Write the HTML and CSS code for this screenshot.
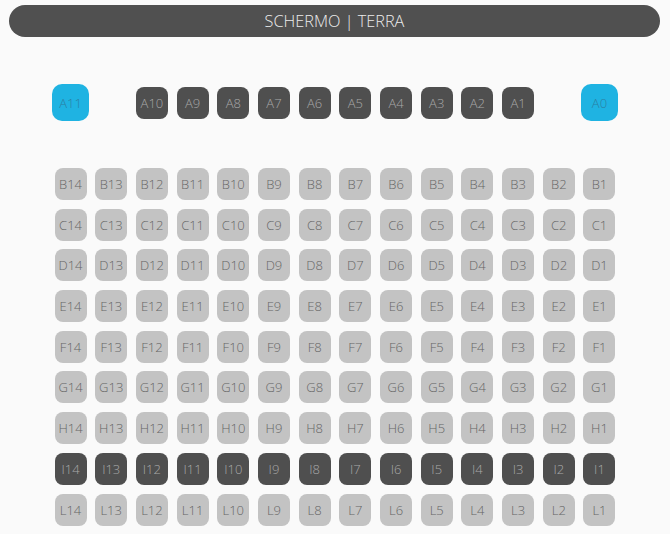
FILE: index.html
```html
<!DOCTYPE html>
<html>
<head>
<meta charset="utf-8">
<link rel="stylesheet" href="styles.css">
</head>
<body>
<div class="screen">SCHERMO | TERRA</div>
<div class="row-a">
  <div class="seat vip c1">A11</div>
  <div class="seat taken c3">A10</div>
  <div class="seat taken">A9</div>
  <div class="seat taken">A8</div>
  <div class="seat taken">A7</div>
  <div class="seat taken">A6</div>
  <div class="seat taken">A5</div>
  <div class="seat taken">A4</div>
  <div class="seat taken">A3</div>
  <div class="seat taken">A2</div>
  <div class="seat taken">A1</div>
  <div class="seat vip c14">A0</div>
</div>
<div class="hall">
  <div class="seat">B14</div><div class="seat">B13</div><div class="seat">B12</div><div class="seat">B11</div><div class="seat">B10</div><div class="seat">B9</div><div class="seat">B8</div><div class="seat">B7</div><div class="seat">B6</div><div class="seat">B5</div><div class="seat">B4</div><div class="seat">B3</div><div class="seat">B2</div><div class="seat">B1</div>
  <div class="seat">C14</div><div class="seat">C13</div><div class="seat">C12</div><div class="seat">C11</div><div class="seat">C10</div><div class="seat">C9</div><div class="seat">C8</div><div class="seat">C7</div><div class="seat">C6</div><div class="seat">C5</div><div class="seat">C4</div><div class="seat">C3</div><div class="seat">C2</div><div class="seat">C1</div>
  <div class="seat">D14</div><div class="seat">D13</div><div class="seat">D12</div><div class="seat">D11</div><div class="seat">D10</div><div class="seat">D9</div><div class="seat">D8</div><div class="seat">D7</div><div class="seat">D6</div><div class="seat">D5</div><div class="seat">D4</div><div class="seat">D3</div><div class="seat">D2</div><div class="seat">D1</div>
  <div class="seat">E14</div><div class="seat">E13</div><div class="seat">E12</div><div class="seat">E11</div><div class="seat">E10</div><div class="seat">E9</div><div class="seat">E8</div><div class="seat">E7</div><div class="seat">E6</div><div class="seat">E5</div><div class="seat">E4</div><div class="seat">E3</div><div class="seat">E2</div><div class="seat">E1</div>
  <div class="seat">F14</div><div class="seat">F13</div><div class="seat">F12</div><div class="seat">F11</div><div class="seat">F10</div><div class="seat">F9</div><div class="seat">F8</div><div class="seat">F7</div><div class="seat">F6</div><div class="seat">F5</div><div class="seat">F4</div><div class="seat">F3</div><div class="seat">F2</div><div class="seat">F1</div>
  <div class="seat">G14</div><div class="seat">G13</div><div class="seat">G12</div><div class="seat">G11</div><div class="seat">G10</div><div class="seat">G9</div><div class="seat">G8</div><div class="seat">G7</div><div class="seat">G6</div><div class="seat">G5</div><div class="seat">G4</div><div class="seat">G3</div><div class="seat">G2</div><div class="seat">G1</div>
  <div class="seat">H14</div><div class="seat">H13</div><div class="seat">H12</div><div class="seat">H11</div><div class="seat">H10</div><div class="seat">H9</div><div class="seat">H8</div><div class="seat">H7</div><div class="seat">H6</div><div class="seat">H5</div><div class="seat">H4</div><div class="seat">H3</div><div class="seat">H2</div><div class="seat">H1</div>
  <div class="seat taken">I14</div><div class="seat taken">I13</div><div class="seat taken">I12</div><div class="seat taken">I11</div><div class="seat taken">I10</div><div class="seat taken">I9</div><div class="seat taken">I8</div><div class="seat taken">I7</div><div class="seat taken">I6</div><div class="seat taken">I5</div><div class="seat taken">I4</div><div class="seat taken">I3</div><div class="seat taken">I2</div><div class="seat taken">I1</div>
  <div class="seat">L14</div><div class="seat">L13</div><div class="seat">L12</div><div class="seat">L11</div><div class="seat">L10</div><div class="seat">L9</div><div class="seat">L8</div><div class="seat">L7</div><div class="seat">L6</div><div class="seat">L5</div><div class="seat">L4</div><div class="seat">L3</div><div class="seat">L2</div><div class="seat">L1</div>
</div>
</body>
</html>
```
FILE: styles.css
```css
html, body {
  margin: 0;
  padding: 0;
  background: #fafafa;
  font-family: "Open Sans", "Noto Sans", sans-serif;
  font-weight: 300;
}

.screen {
  margin: 5px 10px 0 9px;
  height: 32px;
  border-radius: 16px;
  background: #505050;
  color: #ececec;
  font-size: 16.3px;
  display: flex;
  align-items: center;
  justify-content: center;
}

.row-a,
.hall {
  display: grid;
  grid-template-columns: repeat(14, 32px);
  column-gap: 8.7px;
  row-gap: 8.7px;
  justify-content: center;
}

.row-a {
  margin-top: 47px;
  align-items: center;
}

.hall {
  margin-top: 47px;
}

.seat {
  width: 32px;
  height: 32px;
  border-radius: 8px;
  background: #c3c3c3;
  color: #666666;
  font-size: 13px;
  display: flex;
  align-items: center;
  justify-content: center;
  justify-self: center;
}

.seat.taken {
  background: #4f4f4f;
  color: #a8a8a8;
}

.seat.vip {
  width: 37px;
  height: 37px;
  border-radius: 10px;
  background: #1fb3e2;
  color: #2b7fa3;
}

.c1 { grid-column: 1; }
.c3 { grid-column: 3; }
.c14 { grid-column: 14; }
```
